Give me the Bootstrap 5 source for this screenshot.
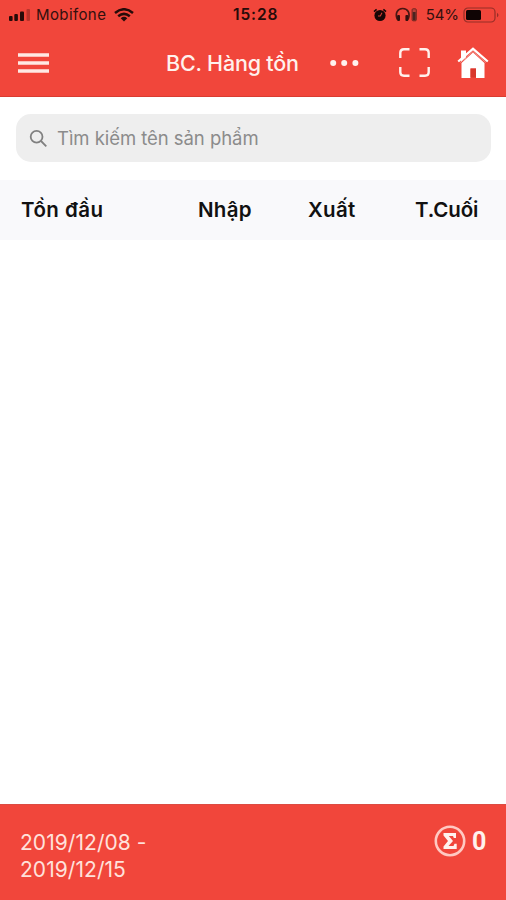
<!DOCTYPE html>
<html lang="vi">
<head>
<meta charset="utf-8">
<meta name="viewport" content="width=device-width, initial-scale=1">
<title>BC. Hàng tồn</title>
<link href="https://cdn.jsdelivr.net/npm/bootstrap@5.3.0/dist/css/bootstrap.min.css" rel="stylesheet">
<style>
body { font-family: Inter, Roboto, sans-serif; background: #fff; }
svg { display: block; flex: none; }
.app-screen { height: 900px; overflow: hidden; }
.app-header { background: #f1463b; height: 97px; border-bottom: 1px solid #d93c31; }
.status-bar { height: 29px; padding: 0 6px 0 8px; display: grid; grid-template-columns: 1fr 44px 1fr; color: #32100e; font-size: 15px; line-height: 29px; }
.carrier { margin-left: 5px; letter-spacing: .4px; }
.clock { color: #260b09; font-weight: 600; font-size: 15.5px; letter-spacing: .9px; padding-left: 1px; }
.level { letter-spacing: -.1px; margin: 0 4px 0 8px; }
.title-bar { height: 67px; padding: 0 18px; color: #fff1ed; }
.screen-title { font-size: 21.5px; font-weight: 500; line-height: 30px; letter-spacing: -.2px; margin: 0 0 0 117px; width: 134px; }
.icon-dots { margin-left: 31px; }
.icon-scan { margin-left: 40px; }
.icon-home { margin-left: 27px; }
.search-wrap { padding: 17px 15px 18px 16px; }
.search-box { height: 48px; border-radius: 15px; background: #eee; padding: 1px 13px 0; color: #8b8b8b; font-size: 18.5px; letter-spacing: -.05px; }
.search-text { margin-left: 9px; }
.columns-head { height: 60px; background: #f9f9fb; padding: 1px 26px 0 21px; color: #111; font-size: 20.5px; font-weight: 600; letter-spacing: .3px; }
.columns-head > div { white-space: nowrap; }
.c-open { width: 177px; letter-spacing: .45px; } .c-in { width: 110px; } .c-out { width: 107px; } .c-end { letter-spacing: -.1px; }
.app-footer { height: 96px; background: #f1463b; border-top: 1px solid #dc4b42; color: #ffe1db; padding: 24px 18px 0 20px; }
.dates { font-size: 21px; line-height: 27px; letter-spacing: .05px; }
.total { color: #fff1ed; font-size: 23px; font-weight: 700; line-height: 27px; height: 24px; gap: 6px; }
.total-value { width: 16px; font-family: Roboto, sans-serif; font-size: 25px; }
</style>
</head>
<body>
<div class="app-screen d-flex flex-column">
  <header class="app-header">
    <div class="status-bar">
      <div class="d-flex align-items-center">
        <svg width="23" height="14" viewBox="0 0 23 14"><g fill="#260b09"><rect x="1" y="8" width="3.6" height="5" rx="1"/><rect x="6.3" y="6" width="3.6" height="7" rx="1"/><rect x="12" y="3.5" width="4" height="9.5" rx="1"/></g><rect x="18.5" y="1" width="3.5" height="12" rx="1" fill="#b9332b"/></svg>
        <span class="carrier">Mobifone</span>
        <svg class="ms-2" width="20" height="14" viewBox="0 0 20 14" fill="none" stroke="#260b09" stroke-width="2.5"><path d="M1 5Q10-2.5 19 5M4.2 8.3Q10 3.5 15.8 8.3"/><path d="M6.7 10.2Q10 7.5 13.3 10.2L10 13.6Z" fill="#260b09" stroke="none"/></svg>
      </div>
      <div class="clock text-nowrap">15:28</div>
      <div class="d-flex align-items-center justify-content-end">
        <svg width="14" height="14" viewBox="0 0 14 14"><circle cx="7" cy="7.5" r="5.6" fill="#180606"/><path d="M1 3.6 3.6 1.4M13 3.6 10.4 1.4" stroke="#180606" stroke-width="1.6"/><path d="M9 4.8 7.3 8H5" fill="none" stroke="#d33e34" stroke-width="1.1"/></svg>
        <svg class="ms-2" width="23" height="15" viewBox="0 0 23 15"><path d="M2.3 12.5C-.2 6 2.5 1.5 7.7 1.5S15.6 6 13.1 12.5" fill="none" stroke="#4a1713" stroke-width="1.7"/><rect x="2.1" y="8" width="2.9" height="6" rx="1" fill="#32100e"/><rect x="10.4" y="8" width="2.9" height="6" rx="1" fill="#32100e"/><rect x="17.1" y="1.8" width="4.2" height="12" rx="1" fill="#b8413a" stroke="#74271f"/><rect x="17.8" y="5" width="2.8" height="8.2" fill="#4a2420"/></svg>
        <span class="level">54%</span>
        <svg width="37" height="16" viewBox="0 0 37 16"><rect x="1" y="1" width="31" height="14" rx="4" fill="none" stroke="#962e27" stroke-width="1.2"/><rect x="3" y="3" width="15" height="10" rx="1.5" fill="#100404"/><path d="M34 5.7Q37 8 34 10.3Z" fill="#962e27"/></svg>
      </div>
    </div>
    <div class="title-bar d-flex align-items-center">
      <svg width="31" height="20" viewBox="0 0 31 20" stroke="#ffe9e4" stroke-width="3.4"><path d="M0 2H31M0 10H31M0 18H31"/></svg>
      <h1 class="screen-title text-nowrap">BC. Hàng tồn</h1>
      <svg class="icon-dots" width="29" height="8" viewBox="0 0 29 8" fill="#fff1ed"><circle cx="3.2" cy="4" r="3"/><circle cx="14.2" cy="4" r="3"/><circle cx="25.4" cy="4" r="3"/></svg>
      <svg class="icon-scan" width="31" height="29" viewBox="0 0 31 29" fill="none" stroke="#fff1ed" stroke-width="2.4"><path d="M1.3 10V5Q1.3 1.3 5 1.3H10.5M20.5 1.3H26Q29.7 1.3 29.7 5V10M29.7 19V24Q29.7 27.7 26 27.7H20.5M10.5 27.7H5Q1.3 27.7 1.3 24V19"/></svg>
      <svg class="icon-home" width="32" height="32" viewBox="0 0 32 32"><path d="M4 3.500H9V11L4 15Z" fill="#fff"/><path d="M4.500 16 16 5.500 27.500 16V31H19V21.500H13.500V31H4.500Z" fill="#fff"/><path d="M1.200 14.500 16 1.800 30.800 14.500" fill="none" stroke="#fff" stroke-width="2.200"/><path d="M3 15.600 16 4.600 29 15.600" fill="none" stroke="#f0a29a" stroke-width=".8"/><rect x="13.500" y="21.500" width="5.500" height="9" fill="#d9372c"/></svg>
    </div>
  </header>
  <main class="flex-grow-1">
    <div class="search-wrap">
      <div class="search-box d-flex align-items-center">
        <svg width="19" height="19" viewBox="0 0 19 19" fill="none" stroke="#808080" stroke-width="1.8"><circle cx="7.600" cy="7.700" r="5.900"/><path d="M12 12 17.300 17.300"/></svg>
        <span class="search-text text-nowrap">Tìm kiếm tên sản phẩm</span>
      </div>
    </div>
    <div class="columns-head d-flex align-items-center">
      <div class="c-open">Tồn đầu</div>
      <div class="c-in">Nhập</div>
      <div class="c-out">Xuất</div>
      <div class="c-end">T.Cuối</div>
    </div>
  </main>
  <footer class="app-footer d-flex justify-content-between align-items-start">
    <div class="dates">2019/12/08 -<br>2019/12/15</div>
    <div class="total d-flex align-items-center">
      <svg width="32" height="32" viewBox="0 0 32 32"><circle cx="16" cy="16" r="14.200" fill="none" stroke="#ffc9c2" stroke-width="2.600"/><path d="M9.500 8H22V13H19.800L19 11H14.800L19 16 14.500 21H19.500L20.500 18.800H22.700V24H9.500V21.500L14 16 9.500 10.500Z" fill="#fff1ed"/></svg>
      <span class="total-value">0</span>
    </div>
  </footer>
</div>
<script src="https://cdn.jsdelivr.net/npm/bootstrap@5.3.0/dist/js/bootstrap.bundle.min.js"></script>
</body>
</html>
